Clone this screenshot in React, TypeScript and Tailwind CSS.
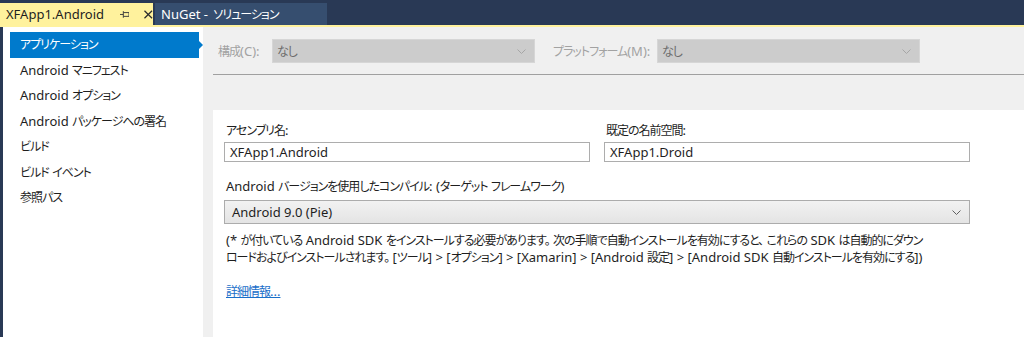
import React from 'react';

const font = "font-['Noto_Sans','Noto_Sans_CJK_JP',sans-serif]";

// Japanese runs are set tighter, like Yu Gothic UI next to Segoe UI
const T = ({ children }: { children: string }) => (
    <>
        {children.split(/([\u3000-\u30ff\u3400-\u9fff\uff00-\uffef]+)/).map((part, i) =>
            i % 2 === 1 ? (
                <span key={i} className="text-[12px] tracking-[-1px] [font-feature-settings:'palt']">{part}</span>
            ) : (
                <React.Fragment key={i}>{part}</React.Fragment>
            )
        )}
    </>
);

const navItems = [
    'アプリケーション',
    'Android マニフェスト',
    'Android オプション',
    'Android パッケージへの署名',
    'ビルド',
    'ビルド イベント',
    '参照パス',
];

const Chevron = ({ color }: { color: string }) => (
    <svg width="9" height="5" viewBox="0 0 9 5" fill="none" stroke={color} strokeWidth="1">
        <path d="M0.5 0.5 L4.5 4.5 L8.5 0.5" />
    </svg>
);

const DisabledSelect = () => (
    <div className="w-[263px] h-[24px] shrink-0 bg-[#cccccc] border border-[#d6d6d6] flex items-center justify-between pl-[4px] pr-[8px] text-[#6d6d6d]">
        <span><T>なし</T></span>
        <Chevron color="#a6a6a6" />
    </div>
);

const TextBox = ({ value }: { value: string }) => (
    <div className="w-[366px] h-[20px] border border-[#adadad] bg-white flex items-center pl-[5px] text-[#1e1e1e]">
        {value}
    </div>
);

export default function App() {
    return (
        <div className={`w-[1024px] h-[337px] flex flex-col bg-[#293955] text-[13px] leading-none overflow-hidden ${font}`}>
            {/* document tabs */}
            <div className="h-[25px] flex items-end gap-[2px] shrink-0">
                <div className="h-[22px] w-[153px] bg-[#fff29d] flex items-center pl-[6px] text-[#1e1e1e]">
                    <span>XFApp1.Android</span>
                    <svg className="ml-[16px]" width="10" height="8" viewBox="0 0 10 8" fill="none" stroke="#3c3c3c" strokeWidth="1">
                        <path d="M0 4.5 H3.5 M3.5 1 V8 M3.5 2.5 H9.5 V6.5 H3.5" />
                    </svg>
                    <svg className="ml-[15px]" width="9" height="9" viewBox="0 0 9 9" fill="none" stroke="#2d2d2d" strokeWidth="1.3">
                        <path d="M0.5 0.5 L8.5 8.5 M8.5 0.5 L0.5 8.5" />
                    </svg>
                </div>
                <div className="h-[22px] w-[172px] bg-[#364e6f] flex items-center pl-[6px] text-white whitespace-nowrap">
                    NuGet -&nbsp;<span className="ml-[2px]"><T>ソリューション</T></span>
                </div>
            </div>
            <div className="h-[2px] bg-[#fff29d] shrink-0" />

            <div className="flex-1 flex pl-[3px]">
                {/* sidebar */}
                <div className="w-[200px] bg-white pt-[5px] pl-[7px] pr-[4px]">
                    {navItems.map((item, i) => (
                        <div
                            key={item}
                            className={`relative h-[25.5px] flex items-center pl-[10px] whitespace-nowrap ${i === 0 ? 'bg-[#007acc] text-white' : 'text-[#1e1e1e]'}`}
                        >
                            <span><T>{item}</T></span>
                            {i === 0 && (
                                <span className="absolute right-[-4px] top-1/2 -translate-y-1/2 w-0 h-0 border-y-[4px] border-y-transparent border-l-[4px] border-l-[#007acc]" />
                            )}
                        </div>
                    ))}
                </div>

                {/* main */}
                <div className="flex-1 bg-[#f0f0f0] pl-[10px] flex flex-col">
                    <div className="h-[48px] flex items-end pb-[1px] border-b border-[#a0a0a0]">
                        <div className="flex items-center h-[24px] mb-[10px] whitespace-nowrap">
                            <span className="ml-[5px] w-[54px] shrink-0 text-[#a2a2a2]"><T>構成(C):</T></span>
                            <DisabledSelect />
                            <span className="ml-[18px] w-[104px] shrink-0 text-[#a2a2a2]"><T>プラットフォーム(M):</T></span>
                            <DisabledSelect />
                        </div>
                    </div>

                    <div className="flex-1 mt-[35px] bg-white pl-[11px] pt-[14px] text-[#1e1e1e]">
                        <div className="flex gap-[14px]">
                            <div className="flex flex-col">
                                <span className="h-[18px] pl-[2px]"><T>アセンブリ名:</T></span>
                                <TextBox value="XFApp1.Android" />
                            </div>
                            <div className="flex flex-col">
                                <span className="h-[18px] pl-[2px]"><T>既定の名前空間:</T></span>
                                <TextBox value="XFApp1.Droid" />
                            </div>
                        </div>

                        <div className="mt-[18px] pl-[2px] h-[20px]">
                            <T>Android バージョンを使用したコンパイル: (ターゲット フレームワーク)</T>
                        </div>
                        <div className="w-[746px] h-[24px] border border-[#acacac] bg-gradient-to-b from-[#f2f2f2] to-[#e4e4e4] flex items-center justify-between pl-[7px] pr-[8px]">
                            <span>Android 9.0 (Pie)</span>
                            <Chevron color="#606060" />
                        </div>

                        <div className="mt-[8px] pl-[2px] leading-[16px] whitespace-nowrap">
                            <div><T>(* が付いている Android SDK をインストールする必要があります。 次の手順で自動インストールを有効にすると、 これらの SDK は自動的にダウン</T></div>
                            <div><T>ロードおよびインストールされます。 [ツール] &gt; [オプション] &gt; [Xamarin] &gt; [Android 設定] &gt; [Android SDK 自動インストールを有効にする])</T></div>
                        </div>

                        <a className="inline-block mt-[19px] ml-[2px] text-[#1a6fc9] underline" href="#">
                            <T>詳細情報...</T>
                        </a>
                    </div>
                </div>
            </div>
        </div>
    );
}
